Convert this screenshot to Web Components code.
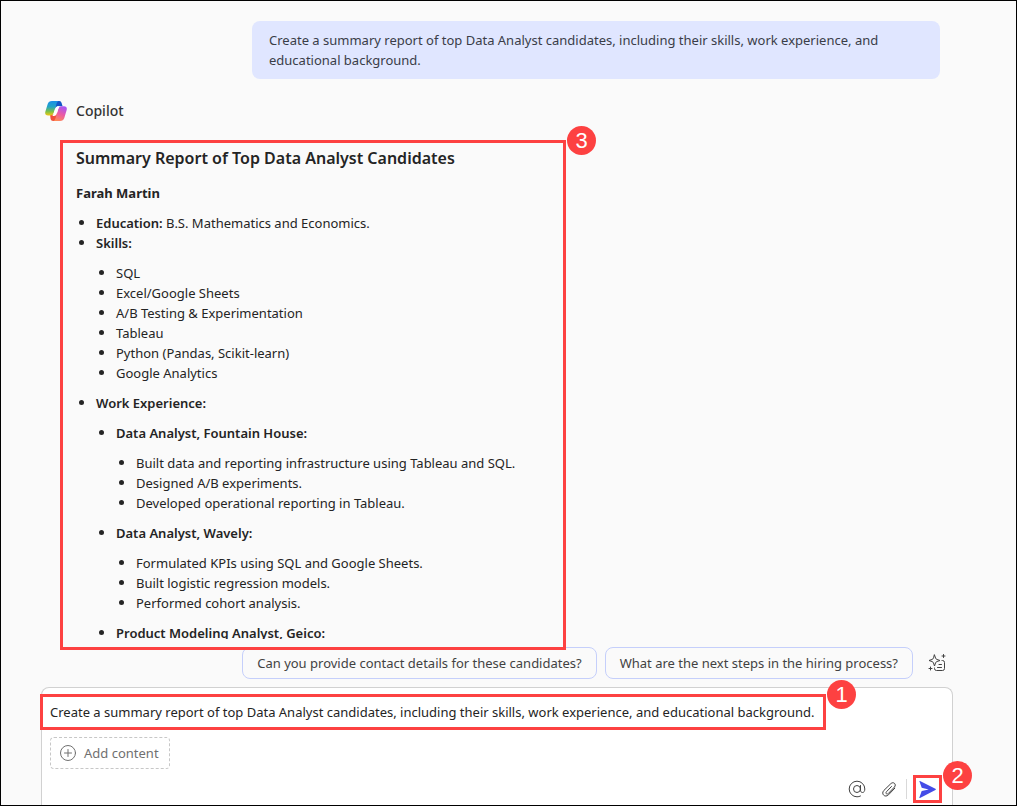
<!DOCTYPE html>
<html lang="en">
<head>
<meta charset="utf-8">
<title>Copilot</title>
<style>
  body { margin: 0; font: 13px/20px "Noto Sans", "Segoe UI", sans-serif; color: #242424; }
</style>
</head>
<body>
<copilot-pane>
  <chat-bubble slot="chat">Create a summary report of top Data Analyst candidates, including their skills, work experience, and educational background.</chat-bubble>
  <copilot-reply slot="chat"></copilot-reply>
  <suggestion-bar slot="foot"></suggestion-bar>
  <prompt-composer slot="foot"></prompt-composer>
</copilot-pane>

<script>
class BaseElement extends HTMLElement {
  connectedCallback() {
    if (this.shadowRoot) return;
    this.attachShadow({ mode: "open" }).innerHTML =
      "<style>*{box-sizing:border-box}:host{box-sizing:border-box}button,textarea{font:inherit;color:inherit;margin:0}</style>" + this.render();
  }
}

customElements.define("call-out", class extends BaseElement {
  render() {
    return `<style>
      :host { position: absolute; z-index: 2; border: 3px solid #fd4141; pointer-events: none; }
      span { position: absolute; left: calc(100% + 4px); top: -17px; width: 29px; height: 29px; border-radius: 50%;
        background: #fd4141; color: #fff; font: 22px/29px "Liberation Sans", Arial, sans-serif; text-align: center; }
    </style><span><slot></slot></span>`;
  }
});

customElements.define("copilot-pane", class extends BaseElement {
  render() {
    return `<style>
      :host { display: flex; flex-direction: column; height: 100vh; padding: 20px 63px 0 40px; gap: 8px;
        border: 1px solid #000; background: #fafafa; overflow: hidden; }
      main { flex: 1; min-height: 0; display: flex; flex-direction: column; }
      footer { display: flex; flex-direction: column; gap: 8px; }
    </style><main><slot name="chat"></slot></main><footer><slot name="foot"></slot></footer>`;
  }
});

customElements.define("chat-bubble", class extends BaseElement {
  render() {
    return `<style>
      :host { display: block; flex: none; align-self: flex-end; max-width: 688px; margin-right: 13px; padding: 9px 17px;
        border-radius: 8px; background: #e0e6ff; color: #3a3d48; }
    </style><slot></slot>`;
  }
});

customElements.define("copilot-reply", class extends BaseElement {
  render() {
    return `<style>
      :host { display: flex; flex-direction: column; flex: 1; min-height: 0; margin-top: 21px; }
      header { display: flex; align-items: center; gap: 9px; padding-left: 4px; height: 22px; font-size: 14px; font-weight: 500; color: #333; }
      header svg { width: 22px; height: 22px; }
      section { position: relative; display: flex; flex: 1; min-height: 0; margin: 18px 0 0 19px; max-width: 506px; }
      call-out { inset: 0 0 -11px 0; }
      article { flex: 1; overflow: hidden; padding: 7px 16px 0; }
      h2 { margin: 0 0 14px; font-size: 16px; line-height: 22px; font-weight: 600; }
      h3 { margin: 0 0 10px; font-size: 13px; line-height: 20px; font-weight: 700; }
      ul { list-style: none; margin: 0; padding-left: 20px; }
      ul ul { margin: 10px 0; }
      li::before { content: ""; display: inline-block; width: 5px; height: 5px; margin: 0 12px 3px -17px; border-radius: 50%; background: #242424; }
      b { font-weight: 600; }
    </style>
    <header><svg viewBox="0 0 22 22" aria-hidden="true">
      <defs>
        <linearGradient id="a" x1="0" y1="0" x2="0" y2="1"><stop offset="0" stop-color="#1a8fe8"/><stop offset=".4" stop-color="#22a5c5"/><stop offset=".72" stop-color="#7cbf4a"/><stop offset="1" stop-color="#f2c811"/></linearGradient>
        <linearGradient id="b" x1=".7" y1="0" x2=".3" y2="1"><stop offset="0" stop-color="#a855f5"/><stop offset=".5" stop-color="#ea5aa5"/><stop offset="1" stop-color="#ff8a55"/></linearGradient>
      </defs>
      <path fill="#1456c8" d="M10 1h4.200c1.400 0 2 .8 2.400 2l1 3.200h-4.300c-1.500 0-2.500 1-3 2.500z"/>
      <path fill="#f0503c" d="M5 14.500h4c1.500 0 2.400-1 2.900-2.500L12 20.900H8.200c-1.500 0-2.200-.8-2.600-2z"/>
      <path fill="url(#a)" d="M7 1h7c-1.400.3-2 1.400-2.400 2.600L8.800 12.500c-.6 1.800-1.600 3-3.500 3H3c-2.500 0-3.300-1.700-2.600-4L2.700 4C3.300 2 4.700 1 7 1z"/>
      <path fill="url(#b)" d="M15 21H8c1.400-.3 2-1.400 2.400-2.600l2.800-9.100c.6-1.800 1.600-3 3.500-3H19c2.500 0 3.300 1.700 2.600 4L19.300 18c-.6 2-2 3-4.300 3z"/>
      <path fill="#fff" d="M10.600 8.200c.5-1.400 1.300-2 2.900-2h1.200c-.8.700-1.200 1.700-1.500 2.800l-1.600 5c-.5 1.300-1.300 1.900-2.700 1.900H7.300c.8-.7 1.200-1.600 1.500-2.700z"/>
    </svg>Copilot</header>
    <section>
      <article>
        <h2>Summary Report of Top Data Analyst Candidates</h2>
        <h3>Farah Martin</h3>
        <ul>
          <li><b>Education:</b> B.S. Mathematics and Economics.</li>
          <li><b>Skills:</b>
            <ul><li>SQL</li><li>Excel/Google Sheets</li><li>A/B Testing &amp; Experimentation</li><li>Tableau</li><li>Python (Pandas, Scikit-learn)</li><li>Google Analytics</li></ul></li>
          <li><b>Work Experience:</b>
            <ul>
              <li><b>Data Analyst, Fountain House:</b>
                <ul><li>Built data and reporting infrastructure using Tableau and SQL.</li><li>Designed A/B experiments.</li><li>Developed operational reporting in Tableau.</li></ul></li>
              <li><b>Data Analyst, Wavely:</b>
                <ul><li>Formulated KPIs using SQL and Google Sheets.</li><li>Built logistic regression models.</li><li>Performed cohort analysis.</li></ul></li>
              <li><b>Product Modeling Analyst, Geico:</b></li>
            </ul></li>
        </ul>
      </article>
      <call-out>3</call-out>
    </section>`;
  }
});

customElements.define("suggestion-bar", class extends BaseElement {
  render() {
    return `<style>
      :host { display: flex; justify-content: flex-end; align-items: center; gap: 8px; }
      .chip { height: 32px; padding: 0 14px; border: 1px solid #c5cffb; border-radius: 8px; background: #fafafa; color: #424242; white-space: nowrap; }
      .more { width: 32px; height: 32px; padding: 6px; border: 0; background: none; color: #424242; }
      svg { display: block; width: 20px; height: 20px; fill: none; stroke: currentColor; stroke-linejoin: round; stroke-linecap: round; }
    </style>
    <button class="chip">Can you provide contact details for these candidates?</button>
    <button class="chip">What are the next steps in the hiring process?</button>
    <button class="more" aria-label="View prompts"><svg viewBox="0 0 20 20">
      <path d="M7.500 2l1.100 3.200c.2.600.6 1 1.200 1.200L13 7.500l-3.200 1.100c-.6.200-1 .6-1.200 1.200L7.500 13l-1.100-3.200c-.2-.6-.6-1-1.200-1.200L2 7.500l3.200-1.100c.6-.2 1-.6 1.200-1.200z"/>
      <path d="M16.500 1.500v3M15 3h3M3.500 14v3M2 15.500h3M15 7.500h.5a2 2 0 0 1 2 2v6a2 2 0 0 1-2 2h-6a2 2 0 0 1-2-2V15M12 11.500h2.500M10.500 14.500h4"/></svg></button>`;
  }
});

customElements.define("prompt-composer", class extends BaseElement {
  render() {
    return `<style>
      :host { display: flex; flex-direction: column; align-items: flex-start; padding: 14px 10px 2px 8px;
        border: 1px solid #d1d1d1; border-bottom: 0; border-radius: 8px 8px 0 0; background: #fff; }
      .field { position: relative; width: 100%; max-width: 776px; height: 20px; margin-bottom: 15px; }
      .field call-out { inset: -8px 0 -8px -10px; }
      textarea { display: block; width: 100%; height: 20px; padding: 0; border: 0; outline: 0; resize: none; background: none; overflow: hidden; white-space: nowrap; }
      .add { display: flex; align-items: center; gap: 8px; height: 32px; padding: 0 10px 0 9px; border: 1px dashed #c7c7c7; border-radius: 4px; background: #fff; color: #707070; margin-bottom: 6px; }
      svg { display: block; fill: none; stroke: currentColor; stroke-linecap: round; stroke-linejoin: round; }
      .tools { display: flex; align-self: flex-end; align-items: center; height: 28px; gap: 6px; color: #424242; }
      .group { display: flex; gap: 10px; }
      .tools button { display: grid; place-items: center; width: 22px; height: 28px; padding: 0; border: 0; background: none; }
      i { width: 1px; height: 20px; background: #d9d9d9; }
      .send { position: relative; }
      .tools .send button { width: 29px; color: #444ce7; }
      .send call-out { inset: 0; }
    </style>
    <div class="field"><textarea rows="1" aria-label="Message Copilot">Create a summary report of top Data Analyst candidates, including their skills, work experience, and educational background.</textarea><call-out>1</call-out></div>
    <button class="add"><svg width="16" height="16" viewBox="0 0 16 16"><circle cx="8" cy="8" r="7.500"/><path d="M8 4.500v7M4.500 8h7"/></svg>Add content</button>
    <div class="tools">
      <div class="group">
      <button aria-label="Mention"><svg width="18" height="18" viewBox="0 0 18 18"><circle cx="9" cy="9" r="3.500"/><path d="M12.500 5.500v4.700c0 1.500.8 2.300 2 2.300 1.500 0 2.300-1.400 2.300-3.500A7.800 7.800 0 1 0 9 16.800c1.300 0 2.500-.3 3.500-.8"/></svg></button>
      <button aria-label="Attach"><svg width="16" height="18" viewBox="0 0 16 18"><path d="M10.500 6.500l-5 5.200c-1.400 1.600.4 3.200 1.800 1.800l6.200-6.500c2.300-2.700-1.100-5.900-3.700-3.300L2.800 10.500c-3.100 3.400 1.300 7.700 4.700 4.300l6.300-6.600"/></svg></button>
      </div>
      <i></i>
      <div class="send"><button aria-label="Send"><svg width="17" height="17" viewBox="0 0 17 17"><path fill="currentColor" stroke="none" d="M.4.300C.2-.1.500-.3 1 0l15.400 7.800c.6.300.6.900 0 1.200L1 16.900c-.5.300-.8.100-.6-.4L2.700 10l7-1.600-7-1.600z"/></svg></button><call-out>2</call-out></div>
    </div>`;
  }
});
</script>
</body>
</html>
